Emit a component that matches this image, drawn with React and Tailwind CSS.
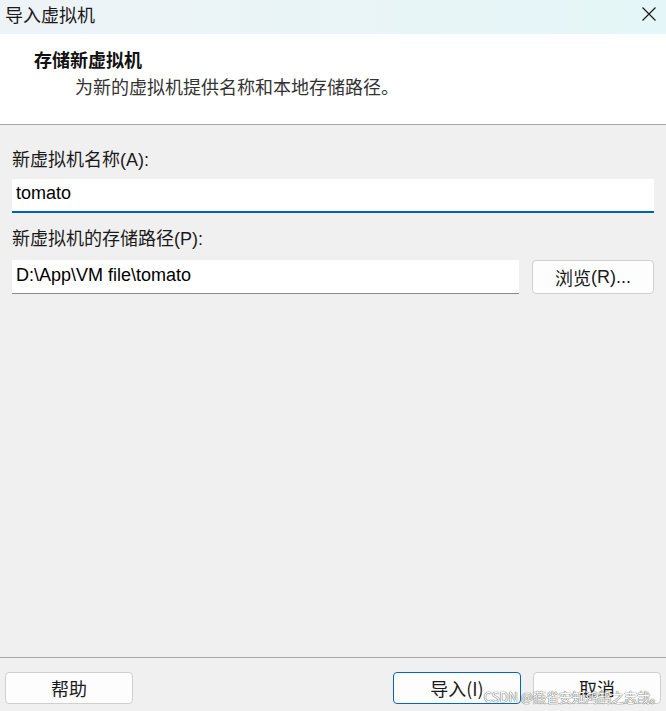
import React from 'react';

const CJK = { fontFamily: '"Noto Sans CJK SC", sans-serif' };

function Label({ children, hotkey }) {
  return (
    <div className="h-[24px] leading-[24px] text-[18px] text-[#1a1a1a]">
      {children}
      <span className="font-['Liberation_Sans',sans-serif] text-[18px]">({hotkey}):</span>
    </div>
  );
}

function DialogButton({ children, primary }) {
  return (
    <button
      className={`h-[32px] w-[128px] rounded-[4px] bg-[#fdfdfd] text-[18px] text-[#1a1a1a] flex items-center justify-center border ${
        primary ? 'border-[#0067c0]' : 'border-[#d0d0d0]'
      }`}
    >
      {children}
    </button>
  );
}

export default function App() {
  return (
    <div
      className="relative w-[666px] h-[711px] flex flex-col bg-[#f0f0f0] overflow-hidden"
      style={CJK}
    >
      {/* Title bar */}
      <div className="h-[34px] flex items-center justify-between pl-[5px] pr-[9px] bg-gradient-to-r from-[#eef3f7] to-[#e4f6f7]">
        <span className="text-[18px] leading-none text-[#1a1a1a] -mt-[6px]">导入虚拟机</span>
        <svg className="w-[16px] h-[16px] -mt-[6px]" viewBox="0 0 16 16" fill="none" stroke="#1a1a1a" strokeWidth="1.2">
          <path d="M1.5 1.5L14.5 14.5M14.5 1.5L1.5 14.5" />
        </svg>
      </div>

      {/* Header */}
      <div className="h-[91px] bg-white border-b border-[#a8a8a8] pt-[13px]">
        <div className="pl-[34px] h-[24px] leading-[24px] text-[18px] font-bold text-[#111]">存储新虚拟机</div>
        <div className="pl-[75px] mt-[3px] h-[24px] leading-[24px] text-[18px] text-[#333]">
          为新的虚拟机提供名称和本地存储路径。
        </div>
      </div>

      {/* Body */}
      <div className="flex-1 px-[12px] pt-[21px]">
        <Label hotkey="A">新虚拟机名称</Label>
        <div className="mt-[9px] h-[34px] bg-white border-b-2 border-[#005fb8] flex items-center pl-[4px] pb-[3px] font-['Liberation_Sans',sans-serif] text-[18px] text-black">
          tomato
        </div>
        <div className="mt-[12px]">
          <Label hotkey="P">新虚拟机的存储路径</Label>
        </div>
        <div className="mt-[11px] flex gap-[13px]">
          <div className="w-[508px] h-[34px] bg-white border-b border-[#8a8a8a] flex items-center pl-[4px] pb-[3px] font-['Liberation_Sans',sans-serif] text-[18px] text-black">
            D:\App\VM file\tomato
          </div>
          <button className="w-[122px] h-[34px] rounded-[4px] bg-[#fdfdfd] border border-[#d0d0d0] flex items-center justify-center text-[18px] text-[#1a1a1a]">
            浏览<span className="font-['Liberation_Sans',sans-serif]">(R)...</span>
          </button>
        </div>
      </div>

      {/* Footer */}
      <div className="h-[54px] border-t border-[#a8a8a8] flex items-start justify-between px-[5px] pt-[14px]">
        <DialogButton>帮助</DialogButton>
        <div className="flex gap-[12px]">
          <DialogButton primary>导入(I)</DialogButton>
          <DialogButton>取消</DialogButton>
        </div>
      </div>

      {/* Watermark */}
      <div className="absolute right-[3px] bottom-[8px] text-[13px] leading-none text-white [text-shadow:0_0_1px_#555,0_0_1px_#555]">
        CSDN @燕雀安知鸿鹄之志哉。
      </div>
    </div>
  );
}
